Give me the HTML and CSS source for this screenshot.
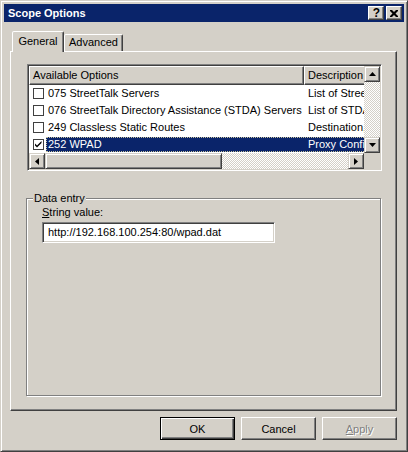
FILE: index.html
```html
<!DOCTYPE html>
<html>
<head>
<meta charset="utf-8">
<link rel="stylesheet" href="styles.css">
</head>
<body>
<div class="window">
  <div class="titlebar">
    <span class="title">Scope Options</span>
    <div class="caption-btns">
      <span class="cap-btn help">?</span>
      <span class="cap-btn close"><svg width="8" height="7" viewBox="0 0 8 7"><path d="M0 0h2l2 2 2-2h2v1l-2.5 2.5 2.5 2.5v1h-2l-2-2-2 2h-2v-1l2.5-2.5-2.5-2.5z" fill="#000"/></svg></span>
    </div>
  </div>
  <div class="content">
    <div class="tabs">
      <div class="tab active">General</div>
      <div class="tab">Advanced</div>
    </div>
    <div class="panel">
      <div class="listview">
        <div class="lv-top">
          <div class="lv-body">
            <div class="lv-header">
              <div class="col-h c1">Available Options</div>
              <div class="col-h c2">Description</div>
            </div>
            <div class="lv-row">
              <span class="cb"></span>
              <span class="cell t1">075 StreetTalk Servers</span>
              <span class="cell t2">List of StreetTalk servers</span>
            </div>
            <div class="lv-row">
              <span class="cb"></span>
              <span class="cell t1">076 StreetTalk Directory Assistance (STDA) Servers</span>
              <span class="cell t2">List of STDA servers</span>
            </div>
            <div class="lv-row">
              <span class="cb"></span>
              <span class="cell t1">249 Classless Static Routes</span>
              <span class="cell t2">Destination, mask and router IP</span>
            </div>
            <div class="lv-row selected">
              <span class="cb checked"><svg width="9" height="9" viewBox="0 0 9 9"><path d="M1 3.5l2 2 4.5-4.5v2l-4.5 4.5-2-2z" fill="#000"/></svg></span>
              <span class="sel">
                <span class="cell t1">252 WPAD</span>
                <span class="cell t2">Proxy Configuration</span>
              </span>
            </div>
          </div>
          <div class="vscroll">
            <div class="sbtn"><svg width="7" height="4" viewBox="0 0 7 4"><path d="M3.5 0L7 4H0z" fill="#000"/></svg></div>
            <div class="track"></div>
            <div class="sbtn"><svg width="7" height="4" viewBox="0 0 7 4"><path d="M0 0h7L3.5 4z" fill="#000"/></svg></div>
          </div>
        </div>
        <div class="lv-bottom">
          <div class="hscroll">
            <div class="sbtn"><svg width="4" height="7" viewBox="0 0 4 7"><path d="M4 0v7L0 3.5z" fill="#000"/></svg></div>
            <div class="thumb"></div>
            <div class="track"></div>
            <div class="sbtn"><svg width="4" height="7" viewBox="0 0 4 7"><path d="M0 0l4 3.5L0 7z" fill="#000"/></svg></div>
          </div>
          <div class="corner"></div>
        </div>
      </div>
      <fieldset class="group">
        <legend>Data entry</legend>
        <div class="field-label"><u>S</u>tring value:</div>
        <div class="textbox">http://192.168.100.254:80/wpad.dat</div>
      </fieldset>
    </div>
    <div class="buttons">
      <div class="btn default"><span>OK</span></div>
      <div class="btn"><span>Cancel</span></div>
      <div class="btn disabled"><span><u>A</u>pply</span></div>
    </div>
  </div>
</div>
</body>
</html>
```
FILE: styles.css
```css
* { box-sizing: border-box; }
html, body { margin: 0; padding: 0; }
body {
  width: 408px;
  height: 452px;
  overflow: hidden;
  background: #d4d0c8;
  font-family: "Liberation Sans", Arial, sans-serif;
  font-size: 11px;
  color: #000;
}
.window {
  width: 408px;
  height: 452px;
  border: 1px solid;
  border-color: #d4d0c8 #404040 #404040 #d4d0c8;
  box-shadow: inset 1px 1px #fff, inset -1px -1px #808080;
  padding: 3px;
  display: flex;
  flex-direction: column;
}
.titlebar {
  height: 18px;
  background: #0a246a;
  display: flex;
  align-items: center;
  padding: 0 2px;
}
.title {
  color: #fff;
  font-weight: bold;
  font-size: 11px;
  padding-left: 2px;
}
.caption-btns {
  margin-left: auto;
  display: flex;
  gap: 2px;
}
.cap-btn {
  width: 16px;
  height: 14px;
  background: #d4d0c8;
  border: 1px solid;
  border-color: #fff #404040 #404040 #fff;
  box-shadow: inset -1px -1px #808080;
  display: flex;
  align-items: center;
  justify-content: center;
}
.cap-btn.help {
  font-weight: bold;
  font-size: 12px;
  line-height: 12px;
  padding-left: 1px;
}
.content {
  flex: 1;
  padding: 9px 7px 0 6px;
  display: flex;
  flex-direction: column;
}
.tabs {
  display: flex;
  align-items: flex-end;
  padding-left: 2px;
  height: 20px;
}
.tab {
  height: 17px;
  line-height: 15px;
  border: 1px solid;
  border-bottom: none;
  border-color: #fff #404040 transparent #fff;
  box-shadow: inset -1px 0 #808080;
  border-radius: 2px 2px 0 0;
  background: #d4d0c8;
  width: 59px;
  text-align: center;
  padding: 0;
}
.tab.active {
  height: 21px;
  width: 52px;
  margin-bottom: -1px;
  line-height: 18px;
  position: relative;
  z-index: 1;
}
.panel {
  height: 360px;
  border: 1px solid;
  border-color: #fff #404040 #404040 #fff;
  box-shadow: inset -1px -1px #808080;
  padding: 12px 0 0 16px;
}
.listview {
  width: 355px;
  height: 107px;
  border: 1px solid;
  border-color: #808080 #fff #fff #808080;
  box-shadow: inset 1px 1px #404040, inset -1px -1px #d4d0c8;
  padding: 1px;
  background: #fff;
  display: flex;
  flex-direction: column;
}
.lv-top {
  display: flex;
  height: 87px;
}
.lv-body {
  width: 335px;
  overflow: hidden;
  background: #fff;
}
.lv-header {
  display: flex;
  height: 19px;
  white-space: nowrap;
}
.col-h {
  height: 19px;
  background: #d4d0c8;
  border: 1px solid;
  border-color: #fff #404040 #404040 #fff;
  box-shadow: inset -1px -1px #808080;
  padding-left: 3px;
  line-height: 16px;
  overflow: hidden;
}
.col-h.c1 { width: 275px; flex: none; }
.col-h.c2 { width: 80px; flex: none; }
.lv-row {
  height: 17px;
  display: flex;
  align-items: center;
  padding-left: 4px;
  white-space: nowrap;
}
.cb {
  width: 11px;
  height: 11px;
  border: 1px solid #404040;
  background: #fff;
  margin-right: 2px;
  flex: none;
  display: flex;
  align-items: center;
  justify-content: center;
}
.cell {
  display: block;
  line-height: 15px;
  overflow: hidden;
}
.cell.t1 {
  width: 258px;
  padding-left: 2px;
  flex: none;
}
.cell.t2 {
  padding-left: 4px;
  flex: none;
}
.sel {
  display: flex;
  height: 15px;
  background: #0a246a;
  color: #fff;
  outline: 1px dotted #c8c39c;
  outline-offset: -1px;
  flex: none;
  width: 320px;
}
.sel .cell.t1 { width: 258px; }
.vscroll {
  width: 16px;
  display: flex;
  flex-direction: column;
}
.track {
  flex: 1;
  background: repeating-conic-gradient(#fff 0 25%, #d4d0c8 0 50%) 0 0 / 2px 2px;
}
.sbtn, .thumb {
  width: 16px;
  height: 16px;
  flex: none;
  background: #d4d0c8;
  border: 1px solid;
  border-color: #d4d0c8 #404040 #404040 #d4d0c8;
  box-shadow: inset 1px 1px #fff, inset -1px -1px #808080;
  display: flex;
  align-items: center;
  justify-content: center;
}
.lv-bottom {
  display: flex;
  height: 16px;
}
.hscroll {
  width: 335px;
  display: flex;
}
.thumb { width: 177px; }
.corner {
  width: 16px;
  background: #d4d0c8;
}
.group {
  margin: 21px 0 0 -1px;
  width: 355px;
  height: 204px;
  border: 1px solid #808080;
  box-shadow: inset 1px 1px #fff, 1px 1px #fff;
  padding: 0 15px;
  min-width: 0;
}
.group legend {
  padding: 0 1px;
  margin-left: -9px;
  line-height: 13px;
  background: #d4d0c8;
}
.field-label {
  line-height: 13px;
  margin-top: 1px;
}
.textbox {
  margin-top: 3px;
  width: 233px;
  height: 21px;
  background: #fff;
  border: 1px solid;
  border-color: #808080 #fff #fff #808080;
  box-shadow: inset 1px 1px #404040, inset -1px -1px #d4d0c8;
  padding-left: 5px;
  line-height: 19px;
  white-space: nowrap;
}
.buttons {
  display: flex;
  justify-content: flex-end;
  gap: 6px;
  margin-top: 6px;
}
.btn {
  width: 75px;
  height: 23px;
  border: 1px solid;
  border-color: #fff #404040 #404040 #fff;
  box-shadow: inset -1px -1px #808080;
  display: flex;
  align-items: center;
  justify-content: center;
}
.btn.default {
  border: 1px solid #000;
  box-shadow: inset 1px 1px #fff, inset -1px -1px #404040, inset -2px -2px #808080;
}
.btn.disabled {
  color: #808080;
  text-shadow: 1px 1px #fff;
}
```
